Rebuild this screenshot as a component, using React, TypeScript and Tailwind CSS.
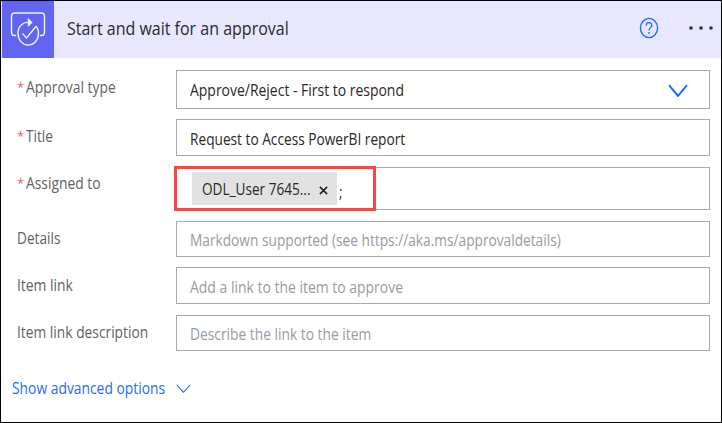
import type { ReactNode } from "react";

const text = "block w-max origin-left whitespace-nowrap leading-5";

function Chevron({ className, weight }: { className: string; weight: number }) {
  return (
    <svg viewBox="0 0 20 12" preserveAspectRatio="none" className={className} fill="none" stroke="#1565ff" strokeWidth={weight}>
      <path d="M1 1L10 11L19 1" />
    </svg>
  );
}

type RowProps = {
  label: string;
  labelClass: string;
  labelTop: string;
  height: string;
  gap: string;
  required?: boolean;
  children: ReactNode;
};

function Row({ label, labelClass, labelTop, height, gap, required, children }: RowProps) {
  return (
    <div className={`flex ${gap}`}>
      <div className={`flex w-[159px] shrink-0 ${labelTop}`}>
        {required && <span className="w-[9px] shrink-0 text-[13px] leading-5 text-[#ee5a5e]">*</span>}
        <span className={`${text} text-[15.5px] text-[#626262] ${labelClass}`}>{label}</span>
      </div>
      <div className={`relative flex w-[534px] shrink-0 border border-[#a9a9a9] pl-[13px] ${height}`}>{children}</div>
    </div>
  );
}

export default function App() {
  return (
    <div className="h-[423px] w-[722px] overflow-hidden border border-black bg-white font-['Open_Sans','Noto_Sans',sans-serif]">
      <header className="flex h-[57px] items-center bg-[#e8e7fd] pl-px">
        <div className="h-[57px] w-[52px] shrink-0 bg-[#6264f2]">
          <svg viewBox="2 1 52 57" className="h-[57px] w-[52px]" fill="none" stroke="#f2f2ff" strokeWidth="1.4">
            <path d="M16 35.5H14.5Q11.5 35.5 11.5 32V16Q11.5 13 14.5 13H41.5Q44.5 13 44.5 16V32Q44.5 35.5 41.5 35.5H40" />
            <path d="M29 22.5C23 21.5 18 26.5 18 33C18 40 22.5 45 28 45C34 45 38.5 40 38.5 33.5C38.5 30.5 37.5 27.8 35.5 26" />
            <path d="M22.5 33.5L26.5 38L36 26.5" />
            <path d="M28.3 18.7L32 22.5L28.3 26.3Z" fill="#f2f2ff" strokeWidth="1" />
          </svg>
        </div>
        <h1 className="-mt-[3px] ml-[13px] w-[570px] shrink-0 text-[18px] text-[#2c2c2c]">
          <span className={`${text} scale-x-[0.889]`}>Start and wait for an approval</span>
        </h1>
        <svg viewBox="0 0 20 22" className="-mt-[4px] ml-[2px] h-[22px] w-[20px] shrink-0" fill="none" stroke="#1c6cf2" strokeWidth="1.3">
          <ellipse cx="10" cy="11" rx="8.6" ry="9.6" />
          <path d="M7.2 8.7C7.2 4.7 12.8 4.8 12.8 8.3C12.8 10.6 10 10.7 10 13.5" />
          <path d="M10 15.2V16.8" strokeWidth="1.7" />
        </svg>
        <svg viewBox="0 0 26 6" className="-mt-[4px] ml-[29px] h-[6px] w-[26px] shrink-0" fill="#303030">
          <circle cx="3" cy="3" r="1.8" />
          <circle cx="13" cy="3" r="1.8" />
          <circle cx="23" cy="3" r="1.8" />
        </svg>
      </header>

      <main className="pl-[16px] pt-[12px]">
        <Row label="Approval type" labelClass="scale-x-[0.895]" labelTop="pt-[7px]" height="h-[39px]" gap="" required>
          <span className={`${text} mt-[9px] scale-x-[0.9] text-[15.5px] text-[#282828]`}>Approve/Reject - First to respond</span>
          <Chevron className="absolute right-[21px] top-[13px] h-[13px] w-[20px]" weight={1.9} />
        </Row>
        <Row label="Title" labelClass="scale-x-[0.88]" labelTop="pt-[7px]" height="h-[37px]" gap="mt-[10px]" required>
          <span className={`${text} mt-[9px] scale-x-[0.883] text-[15.5px] text-[#282828]`}>Request to Access PowerBI report</span>
        </Row>
        <Row label="Assigned to" labelClass="scale-x-[0.893]" labelTop="pt-[6px]" height="h-[43px]" gap="mt-[11px]" required>
          <div className="ml-[2px] mt-[4px] flex h-[33px] w-[145px] shrink-0 items-center bg-[#e2e2e2] pl-[10px]">
            <span className="w-[117px] shrink-0">
              <span className={`${text} scale-x-[0.878] text-[15.5px] text-[#282828]`}>ODL_User 7645...</span>
            </span>
            <svg viewBox="0 0 10 10" className="mt-[3px] size-[9px] shrink-0" stroke="#202020" strokeWidth="1.7">
              <path d="M1 1L9 9M9 1L1 9" />
            </svg>
          </div>
          <span className={`${text} ml-[2px] mt-[14px] scale-x-[0.87] text-[15.5px] text-[#303030]`}>;</span>
          <div className="absolute -left-[3px] -top-[2px] h-[45px] w-[202px] border-[3px] border-[#ff4343]" />
        </Row>
        <Row label="Details" labelClass="scale-x-[0.88]" labelTop="pt-[7px]" height="h-[36px]" gap="mt-[11px]">
          <span className={`${text} mt-[8px] scale-x-[0.884] text-[15.5px] text-[#979ba2]`}>Markdown supported (see https://aka.ms/approvaldetails)</span>
        </Row>
        <Row label="Item link" labelClass="scale-x-[0.895]" labelTop="pt-[8px]" height="h-[37px]" gap="mt-[10px]">
          <span className={`${text} mt-[9px] scale-x-[0.9] text-[15.5px] text-[#979ba2]`}>Add a link to the item to approve</span>
        </Row>
        <Row label="Item link description" labelClass="scale-x-[0.89]" labelTop="pt-[7px]" height="h-[36px]" gap="mt-[11px]">
          <span className={`${text} mt-[8px] scale-x-[0.89] text-[15.5px] text-[#979ba2]`}>Describe the link to the item</span>
        </Row>
        <button className="-ml-[5px] mt-[27px] flex items-center">
          <span className="w-[164px] text-left">
            <span className={`${text} scale-x-[0.893] text-[15.5px] text-[#1f6cff]`}>Show advanced options</span>
          </span>
          <Chevron className="h-[9px] w-[15px]" weight={1.4} />
        </button>
      </main>
    </div>
  );
}
